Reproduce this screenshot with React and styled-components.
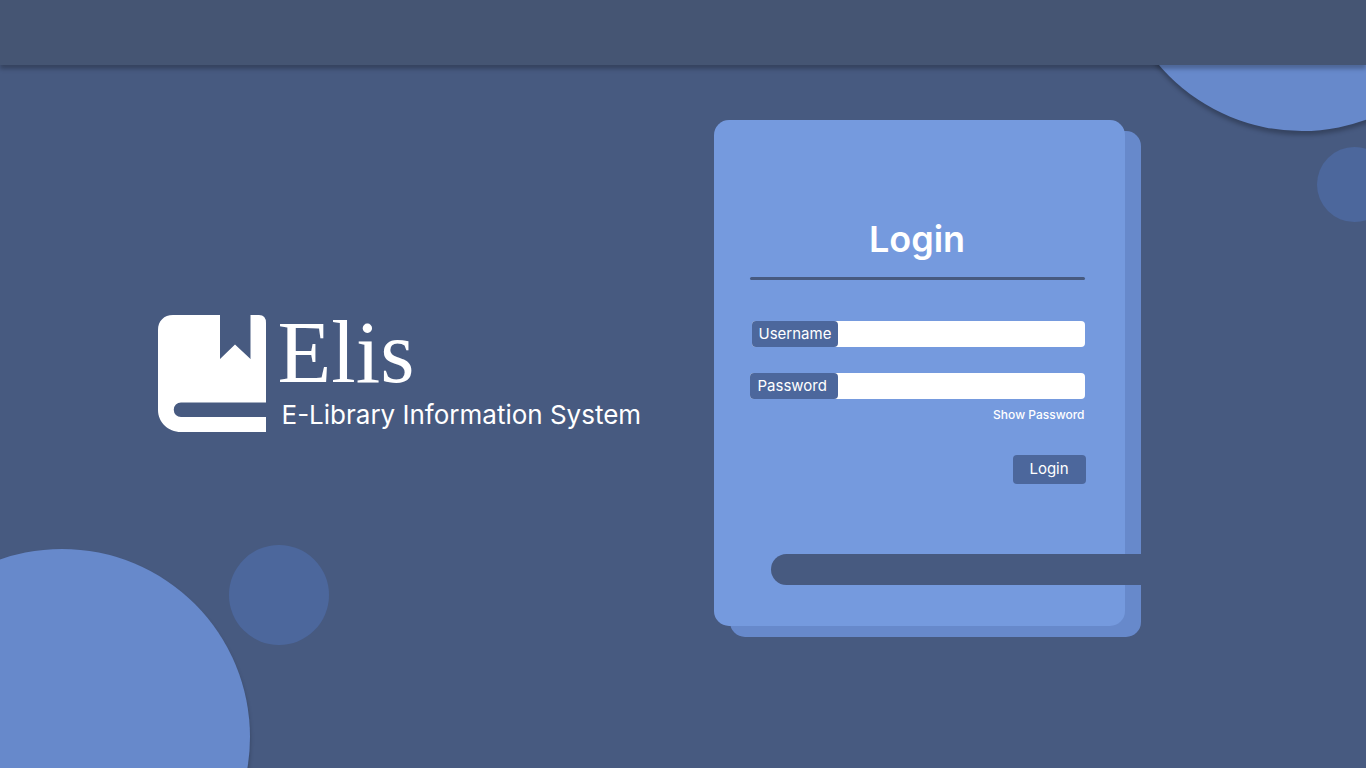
import React, { useState } from "react";
import styled, { createGlobalStyle, ThemeProvider } from "styled-components";

const theme = {
  page: "#475a80",
  bar: "#455573",
  card: "#759ade",
  shade: "#6789cb",
  accent: "#4c679c",
  sans: 'Inter, "Open Sans", sans-serif',
  serif: '"Liberation Serif", serif',
};

const GlobalStyle = createGlobalStyle`
  *, *::before, *::after { box-sizing: border-box; }
  body {
    margin: 0;
    background: ${theme.page};
    color: #fff;
    font-family: ${theme.sans};
  }
`;

const Page = styled.div`
  position: relative;
  display: flex;
  flex-direction: column;
  min-height: 100vh;
  overflow: hidden;
`;

const TopBar = styled.header`
  position: relative;
  z-index: 2;
  flex: none;
  height: 65px;
  background: ${(p) => p.theme.bar};
  box-shadow: 0 4px 4px rgba(0, 0, 0, 0.25);
`;

const Circle = styled.div`
  position: absolute;
  width: ${(p) => p.$size}px;
  height: ${(p) => p.$size}px;
  border-radius: 50%;
  background: ${(p) => (p.$large ? p.theme.shade : p.theme.accent)};
  box-shadow: ${(p) => (p.$large ? "0 4px 4px rgba(0, 0, 0, 0.25)" : "none")};
`;

const TopLarge = styled(Circle)`
  top: -245px;
  right: -124px;
`;

const TopSmall = styled(Circle)`
  top: 147px;
  right: -26px;
`;

const BottomLarge = styled(Circle)`
  bottom: -157px;
  left: -126px;
`;

const BottomSmall = styled(Circle)`
  bottom: 123px;
  left: 229px;
`;

const Main = styled.main`
  position: relative;
  flex: 1;
  display: flex;
  flex-wrap: wrap;
  align-items: center;
  justify-content: center;
  gap: 72px;
  padding: 24px 84px 111px 0;
`;

const Brand = styled.div`
  display: flex;
  align-items: center;
  gap: 12px;
`;

const Logo = styled.svg`
  display: block;
  flex: none;
  width: 108px;
  height: 117px;
`;

const BrandText = styled.div`
  width: 364px;
`;

const BrandName = styled.h1`
  margin: 0;
  font: 400 88px/78px ${(p) => p.theme.serif};
`;

const Tagline = styled.p`
  margin: 0;
  padding: 6px 0 0 4px;
  font-size: 26px;
  line-height: 34px;
  font-weight: 400;
  white-space: nowrap;
`;

const Card = styled.form`
  display: flex;
  flex-direction: column;
  width: 411px;
  padding: 96px 40px 41px 36px;
  border-radius: 15px;
  background: ${(p) => p.theme.card};
  box-shadow: 16px 11px 0 ${(p) => p.theme.shade};
`;

const Title = styled.h2`
  margin: 0;
  font-size: 36px;
  line-height: 46px;
  font-weight: 600;
  text-align: center;
`;

const Rule = styled.hr`
  width: 100%;
  height: 3px;
  margin: 15px 0 41px;
  border: 0;
  border-radius: 2px;
  background: ${(p) => p.theme.page};
`;

const Field = styled.div`
  display: flex;
  height: 26px;
  margin-left: ${(p) => p.$inset || 0}px;
  border-radius: 4px;
  background: #fff;

  & + & {
    margin-top: 26px;
  }
`;

const Label = styled.label`
  flex: none;
  width: ${(p) => p.$width}px;
  padding-left: ${(p) => p.$indent}px;
  border-radius: 4px;
  background: ${(p) => p.theme.accent};
  font-size: 15px;
  line-height: 26px;
  font-weight: 400;
`;

const Input = styled.input`
  flex: 1;
  min-width: 0;
  padding: 0 8px;
  border: 0;
  outline: none;
  background: transparent;
  color: ${(p) => p.theme.page};
  font: 400 15px/26px ${(p) => p.theme.sans};
`;

const ShowButton = styled.button`
  align-self: flex-end;
  margin: 6px 0 0;
  padding: 0;
  border: 0;
  background: none;
  color: #fff;
  font: 500 12px/20px ${(p) => p.theme.sans};
  cursor: pointer;
`;

const SubmitButton = styled.button`
  align-self: flex-end;
  width: 73px;
  height: 29px;
  margin: 30px -1px 0 0;
  padding: 0 0 2px;
  border: 0;
  border-radius: 4px;
  background: ${(p) => p.theme.accent};
  color: #fff;
  font: 400 15px/26px ${(p) => p.theme.sans};
  cursor: pointer;
`;

const PageSlot = styled.div`
  height: 31px;
  margin: 70px -56px 0 21px;
  border-radius: 16px 0 0 16px;
  background: ${(p) => p.theme.page};
`;

function BookLogo() {
  return (
    <Logo viewBox="0 0 108 117" aria-hidden="true">
      <path
        fill="#fff"
        d="M15 0H62V44L77 29.500L92.500 44V0H101Q108 0 108 8V87.500H23A7.250 7.250 0 0 0 23 102H108V117H23C10 117 0 107 0 95V15C0 6 6 0 15 0Z"
      />
    </Logo>
  );
}

export default function App() {
  const [visible, setVisible] = useState(false);

  return (
    <ThemeProvider theme={theme}>
      <GlobalStyle />
      <Page>
        <TopLarge $size={376} $large />
        <TopSmall $size={75} />
        <BottomLarge $size={376} $large />
        <BottomSmall $size={100} />
        <TopBar />
        <Main>
          <Brand>
            <BookLogo />
            <BrandText>
              <BrandName>Elis</BrandName>
              <Tagline>E-Library Information System</Tagline>
            </BrandText>
          </Brand>
          <Card onSubmit={(e) => e.preventDefault()}>
            <Title>Login</Title>
            <Rule />
            <Field $inset={2}>
              <Label htmlFor="username" $width={86} $indent={7}>
                Username
              </Label>
              <Input id="username" type="text" autoComplete="username" />
            </Field>
            <Field>
              <Label htmlFor="password" $width={88} $indent={8}>
                Password
              </Label>
              <Input
                id="password"
                type={visible ? "text" : "password"}
                autoComplete="current-password"
              />
            </Field>
            <ShowButton type="button" onClick={() => setVisible(!visible)}>
              Show Password
            </ShowButton>
            <SubmitButton type="submit">Login</SubmitButton>
            <PageSlot />
          </Card>
        </Main>
      </Page>
    </ThemeProvider>
  );
}
